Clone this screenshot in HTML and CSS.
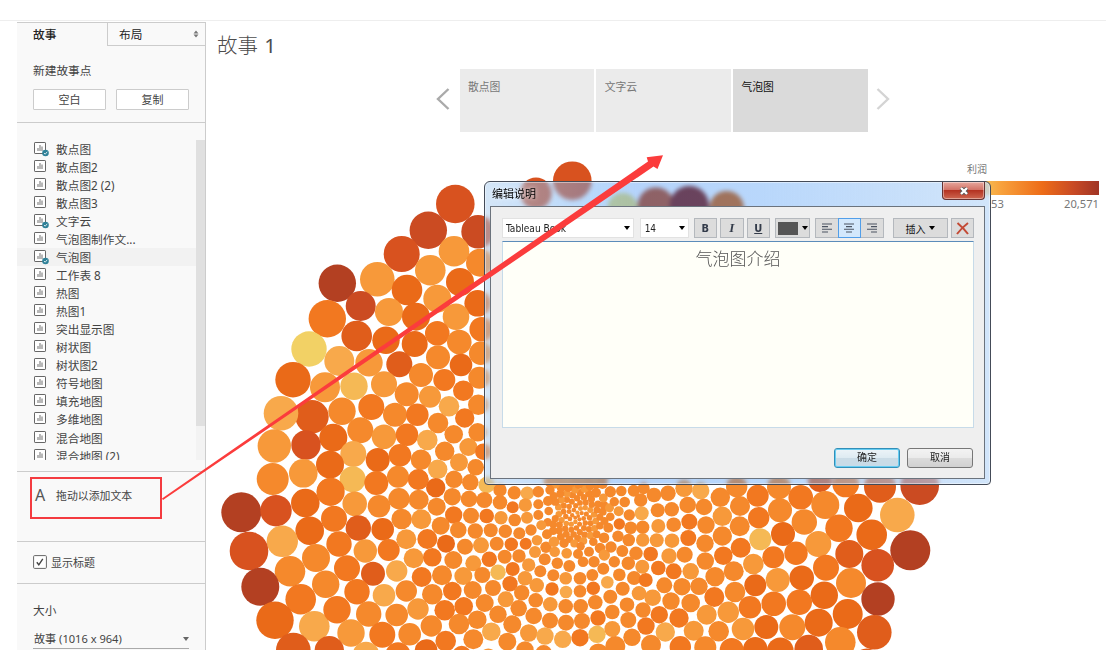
FILE: index.html
```html
<!DOCTYPE html>
<html lang="zh-CN">
<head>
<meta charset="utf-8">
<title>故事 1</title>
<link rel="stylesheet" href="styles.css">
</head>
<body>
<div class="frame">
  <div class="workspace">
    <aside class="sidebar">
      <div class="tabs"><div class="tab">故事</div><div class="tab tab-off">布局
        <svg class="sorter" width="6" height="8" viewBox="0 0 6 8"><path d="M.5 3.500 3 .5l2.500 3zM.5 4.500 3 7.500l2.500-3z"/></svg></div></div>
      <section class="new-point">
        <div>新建故事点</div>
        <div class="buttons"><button>空白</button><button>复制</button></div>
      </section>
      <section class="sheets"><ul class="list" id="list"></ul><div class="scroll"><div class="thumb"></div></div></section>
      <section class="drag"><span class="letter">A</span><span>拖动以添加文本</span></section>
      <section class="check"><svg width="14" height="14" viewBox="0 0 14 14"><rect x=".6" y=".6" width="12.800" height="12.800" rx="1" class="box"/><path class="tick" d="m3.800 7.300 2 2.500L9.800 3.800"/></svg><span>显示标题</span></section>
      <section class="size"><div>大小</div><div class="select"><span>故事 (1016 x 964)</span><i class="caret"></i></div></section>
    </aside>
    <main class="story">
      <h1>故事 <span>1</span></h1>
      <nav class="points">
        <svg class="nav-arrow" width="14" height="22" viewBox="0 0 14 22"><path d="M12.500 1 2 11l10.500 10"/></svg>
        <div class="point">散点图</div><div class="point">文字云</div><div class="point current">气泡图</div>
        <svg class="nav-arrow next" width="14" height="22" viewBox="0 0 14 22"><path d="M1.500 1 12 11 1.500 21"/></svg>
      </nav>
      <div class="legend"><div>利润</div><div class="ramp"></div><div class="range"><span>53</span><span>20,571</span></div></div>
    </main>
  </div>
  <svg class="chart" id="chart" width="1106" height="650" viewBox="0 0 1106 650"></svg>

  <div class="dialog">
    <div class="titlebar"><span>编辑说明</span><div class="close"><svg width="10" height="8" viewBox="0 0 10 8"><path class="x-edge" d="m2 1 6 6M8 1 2 7"/><path class="x-face" d="m2 1 6 6M8 1 2 7"/></svg></div></div>
    <div class="client">
      <div class="toolbar">
        <div class="combo font-name">Tableau Book<i class="caret dark"></i></div>
        <div class="combo font-size">14<i class="caret dark"></i></div>
        <div class="tool bold">B</div><div class="tool italic">I</div><div class="tool under">U</div>
        <div class="tool color"><span class="swatch"></span><i class="caret dark"></i></div>
        <div class="aligns">
          <div class="tool"><svg width="10" height="10" viewBox="0 0 10 10"><path d="M0 1h10M0 3.600h6M0 6.300h10M0 9h6"/></svg></div>
          <div class="tool chosen"><svg width="10" height="10" viewBox="0 0 10 10"><path d="M0 1h10M2 3.600h6M0 6.300h10M2 9h6"/></svg></div>
          <div class="tool"><svg width="10" height="10" viewBox="0 0 10 10"><path d="M0 1h10M4 3.600h6M0 6.300h10M4 9h6"/></svg></div>
        </div>
        <div class="tool insert">插入<i class="caret dark"></i></div>
        <div class="tool clear"><svg width="13" height="13" viewBox="0 0 13 13"><path d="M1.500 1C5 4 9 8 12 12M12 1C8 4 4 8 1 12"/></svg></div>
      </div>
      <div class="editor">气泡图介绍</div>
      <div class="actions"><button class="primary">确定</button><button>取消</button></div>
    </div>
  </div>

  <div class="callout"></div>
  <svg class="arrow" width="1106" height="650" viewBox="0 0 1106 650"><path d="M162 498.600 648 161.500 646.700 157.300 663 155.200 657.500 169 653.500 166.500 163 500z"/></svg>
</div>
<script src="bubbles.js"></script>
</body>
</html>
```
FILE: styles.css
```css
* { box-sizing: border-box; }
body { margin: 0; background: #fff; font-family: "Noto Sans", "Noto Sans CJK SC", sans-serif; font-size: 11.7px; color: #444; }
button { font: inherit; color: inherit; padding: 0; }
.frame { position: relative; width: 1106px; height: 650px; overflow: hidden; padding-top: 20px; }
.workspace { display: flex; height: 630px; border-top: 1px solid #eee; padding-left: 17px; }
.sidebar { width: 189px; flex: none; display: flex; flex-direction: column; background: #f9f9f9; border-right: 1px solid #ccc; border-top: 1px solid #ccc; margin-top: 1px; }
.tabs { display: flex; height: 23px; flex: none; line-height: 23px; color: #222; }
.tab { width: 90px; padding-left: 16px; font-weight: 500; }
.tab-off { flex: 1; border-left: 1px solid #ccc; border-bottom: 1px solid #ccc; padding: 0 6px 0 11px; display: flex; justify-content: space-between; align-items: center; font-weight: 400; }
.sorter { fill: #777; }
.new-point { height: 77px; flex: none; padding: 16px 16px 0; line-height: 16px; border-bottom: 1px solid #ccc; }
.buttons { display: flex; justify-content: space-between; margin-top: 11px; }
.buttons button { width: 73px; height: 21px; line-height: 18px; background: #fff; border: 1px solid #ccc; border-radius: 1px; font-size: 11px; }
.sheets { height: 349px; flex: none; padding-top: 17px; border-bottom: 1px solid #ccc; display: flex; }
.list { list-style: none; margin: 0; padding: 0; width: 179px; height: 320px; overflow: hidden; }
.list li { height: 18.040px; line-height: 18px; padding-left: 17px; display: flex; align-items: center; gap: 7px; white-space: nowrap; }
.list li svg { flex: none; margin-top: -1px; }
.list li.active { background: #f2f2f2; }
.scroll { width: 9px; height: 320px; background: #f3f3f3; }
.thumb { height: 286px; background: #e0e0e0; }
.drag { height: 70px; flex: none; border-bottom: 1px solid #ccc; padding: 14px 0 0 18px; display: flex; line-height: 20px; font-size: 10.900px; }
.letter { width: 21px; font-size: 16px; line-height: 18px; color: #555; }
.check { height: 42px; flex: none; border-bottom: 1px solid #ccc; padding: 0 0 1px 16px; display: flex; align-items: center; gap: 4px; font-size: 11px; }
.box { fill: #fff; stroke: #666; }
.tick { fill: none; stroke: #444; stroke-width: 1.400; }
.size { padding: 18px 16px 0; line-height: 16px; }
.select { display: flex; justify-content: space-between; align-items: center; margin-top: 12px; height: 19px; border-bottom: 1px solid #aaa; font-size: 11.100px; padding-left: 1px; }
.caret { width: 0; height: 0; border: 3px solid transparent; border-top: 4px solid #666; border-bottom: 0; }
.caret.dark { border-width: 4px 3.500px 0; border-top-color: #000; }
.story { flex: 1; position: relative; padding-left: 11px; }
h1 { margin: 9px 0 0; font-size: 20.500px; line-height: 30px; font-weight: 300; color: #4d4d4d; }
h1 span { font-weight: 400; margin-left: 1px; }
.points { display: flex; align-items: center; height: 63px; margin: 9px 0 0 218.500px; gap: 2px; }
.nav-arrow { fill: none; stroke: #aaa; stroke-width: 2.400; margin: 0 8px 4px 0; }
.next { stroke: #d4d4d4; margin: 0 0 4px 6px; }
.point { width: 134.700px; height: 63px; background: #ebebeb; color: #777; font-size: 10.800px; padding: 9px 8.500px; line-height: 18px; }
.current { background: #dadada; color: #111; }
.legend { width: 132px; margin: 29px 0 0 750px; font-size: 10px; line-height: 16px; color: #777; }
.ramp { height: 14px; width: 126px; margin: 4px 0 0 6px; background: linear-gradient(90deg, #f4d166, #f8a23d 22%, #ed6c18 55%, #c84a25 80%, #a03425); }
.range { display: flex; justify-content: space-between; padding-left: 24px; font-size: 11.200px; line-height: 18px; }
.chart, .arrow { position: absolute; left: 0; top: 0; }
.arrow { fill: #fb3c3c; }
.callout { position: absolute; left: 30px; top: 477px; width: 132px; height: 42px; border: 2px solid #f43b40; }
.dialog { position: absolute; left: 484px; top: 181px; width: 507px; height: 304px; border: 1px solid #444b58; border-radius: 6px 6px 4px 4px; padding: 0 5px 5px; background: linear-gradient(90deg, rgba(170,205,240,.5), rgba(100,170,245,.45) 20%, rgba(60,140,245,.38) 30%, rgba(70,150,245,.38) 55%, rgba(190,218,248,.7)); backdrop-filter: blur(2px); box-shadow: inset 0 0 0 1px rgba(255,255,255,.45); font-family: "DejaVu Sans Condensed", "Noto Sans CJK SC", sans-serif; font-size: 10px; color: #222; }
.titlebar { height: 24px; display: flex; justify-content: space-between; padding-left: 2px; line-height: 25px; font-size: 11px; color: #000; text-shadow: 0 0 5px #fff; }
.close { width: 43px; height: 18px; border: 1px solid #633; border-top: 0; border-radius: 0 0 4px 4px; display: flex; align-items: center; justify-content: center; background: linear-gradient(#e6a79d, #d27064 48%, #b43322 50%, #ce6751); box-shadow: inset 0 0 0 1px rgba(255,255,255,.4); }
.x-edge { stroke: #555; stroke-width: 4; } .x-face { stroke: #fff; stroke-width: 2.400; }
.client { height: 273px; background: #efefef; border: 1px solid #6b737d; padding: 11px 10px 0 11px; }
.toolbar { display: flex; height: 20px; }
.combo { background: #fff; border: 1px solid #e2e2e2; display: flex; align-items: center; justify-content: space-between; padding: 0 3px; height: 20px; }
.font-name { width: 132px; margin-right: 6px; font-size: 10.100px; font-family: "DejaVu Sans Condensed", sans-serif; } .font-size { width: 49px; margin-right: 5px; padding-left: 4px; }
.tool { height: 20px; width: 23.500px; flex: none; background: #dcdcdc; border: 1px solid #b4b8bd; display: flex; align-items: center; justify-content: center; margin-right: 3px; color: #333b4a; font-size: 11px; }
.bold { font-weight: 700; } .italic { font: italic bold 13px "Liberation Serif", serif; } .under { font-weight: 700; text-decoration: underline; }
.color { width: 35px; justify-content: space-between; padding: 0 1px 0 2px; margin: 0 5px 0 2px; }
.swatch { width: 20px; height: 13px; background: #555; }
.aligns { display: flex; margin-right: 10px; }
.aligns .tool { margin: 0 -1px 0 0; }
.aligns svg { stroke: #4b5361; stroke-width: 1.100; }
.aligns .chosen { background: #d3e8fc; border-color: #519ee9; position: relative; }
.insert { width: 55px; gap: 3px; color: #111; font-size: 10px; }
.clear { margin-right: 0; width: 23.500px; } .clear svg { fill: none; stroke: #c34a35; stroke-width: 2; }
.editor { height: 187px; margin-top: 2.500px; background: #fffff8; border: 1px solid #c7dbe9; border-top-color: #5c8cba; text-align: center; padding-top: 3px; font: 300 17px/25px "Noto Sans CJK SC", sans-serif; color: #555; }
.actions { display: flex; justify-content: flex-end; gap: 7px; padding: 20px 1px 0 0; }
.actions button { width: 66px; height: 20px; border: 1px solid #777; border-radius: 3px; background: linear-gradient(#f3f3f3, #ebebeb 48%, #dcdcdc 50%, #d0d0d0); line-height: 18px; }
.actions .primary { border-color: #328fb8; box-shadow: inset 0 0 0 1px #67cdf2; background: linear-gradient(#edf4f8, #deebf2 48%, #cbdce6 50%, #c7dbe8); }
```
FILE: bubbles.js
```javascript
const sheets = ["*散点图", "散点图2", "散点图2 (2)", "散点图3", "*文字云", "气泡图制作文...", "*气泡图", "工作表 8", "热图", "热图1", "突出显示图", "树状图", "树状图2", "符号地图", "填充地图", "多维地图", "混合地图", "混合地图 (2)"];
document.getElementById("list").innerHTML = sheets.map((s, i) => {
  const used = s[0] === "*";
  const badge = used ? '<circle cx="11.500" cy="13" r="3.300" fill="#2f8198"/><path d="m10 13 1.200 1.200 2-2.400" stroke="#fff" fill="none" stroke-width=".8"/>' : "";
  return `<li class="${i === 6 ? "active" : ""}"><svg width="15" height="17" viewBox="0 0 15 17"><rect x=".5" y="2.500" width="11" height="11" rx=".6" fill="#fff" stroke="#666"/><path d="M4 11V8M6 11V5M8 11V6.500" stroke="#888" stroke-width="1.200"/>${badge}</svg><span>${used ? s.slice(1) : s}</span></li>`;
}).join("");

// Profit ramp, dark to light; m to q are the tones seen through the title bar glass.
const ramp = { a: "#b34022", b: "#cb4b22", c: "#d8521f", d: "#e05d1b", e: "#ea6a18", f: "#f27820", g: "#f5892c", h: "#f7993a", i: "#f8a94b", j: "#f5b955", k: "#f2d165", m: "#c04810", n: "#841400", p: "#d86000", q: "#f0e070" };

// Each tile: origin x, origin y, then bubbles in thirds of a pixel (x, y, r, shade).
const tiles = [
  [430, 50, "427,392,58,c 318,430,47,c 578,475,46,q 678,467,55,m 778,467,59,n 890,475,52,p"],
  [310, 150, "436,162,58,c 355,241,56,b 275,312,54,c 504,245,50,b 432,304,46,h 361,361,46,h 82,400,56,a 202,388,52,h 152,468,45,b 291,420,46,e 510,338,42,g 450,396,42,e 382,446,42,h 52,506,56,f 237,486,42,h 318,500,42,e 503,460,40,e 438,500,40,h"],
  [310, 310, "140,78,46,d 228,91,41,e 314,102,39,e 382,70,37,f 448,96,37,g 515,58,37,f -3,117,53,k 88,153,45,i 177,158,41,h 268,163,39,d 384,142,36,g 453,165,34,e 512,130,35,g 333,195,36,g 403,210,33,f 508,203,33,g 45,232,45,h 132,229,41,j 222,223,39,h 290,253,36,g 360,260,33,h 460,242,31,f 417,289,31,i 505,284,31,g 6,320,50,d 96,304,41,g 184,291,39,f 255,314,36,g 322,314,34,f 464,324,29,f 384,339,31,g 503,367,28,g 70,383,42,e 151,361,39,g 222,380,37,h 291,374,34,f 431,373,28,g -12,405,44,c 352,390,31,i 475,411,27,h 130,432,39,i 404,424,29,g 60,464,42,e 203,450,36,e 270,436,34,f 333,449,31,g 383,478,29,i 447,457,27,h 520,425,25,f 497,472,25,g 128,508,39,j -20,490,43,h 62,545,42,f 199,519,36,f 264,500,33,g 325,509,31,f 377,533,29,e 432,508,26,g 481,517,25,g 530,525,25,j"],
  [0, 230, "879,449,53,e 843,550,52,i 823,648,50,h 818,747,48,g"],
  [200, 470, "124,127,60,a 228,122,47,c 316,99,43,e 391,66,41,f 464,101,37,h 537,109,34,g 597,86,32,g 656,89,30,g 402,146,39,f 329,182,43,e 247,214,47,i 147,243,58,c 475,174,38,d 548,178,34,e 605,147,31,g 664,148,30,h 417,222,38,f 348,264,42,g 496,243,35,h 566,240,33,f 619,208,30,h 682,207,30,f 270,304,46,g 181,350,57,a 441,295,39,f 377,343,41,g 519,311,36,d 590,303,32,i 641,265,30,h 665,321,30,f 697,262,28,f 302,388,46,f 471,365,38,f 552,376,34,i 619,363,32,g 225,451,56,e 343,469,46,i 411,419,41,f 506,432,38,g 590,435,34,g 654,417,32,h 453,489,41,h 547,494,39,f 629,493,34,g 280,540,52,d 388,542,44,d 498,555,40,i 594,555,38,f 674,540,30,e"],
  [420, 470, "-5,28,31,f 97,80,26,g 147,87,25,g 193,90,24,g 240,97,22,g 50,110,27,g 101,135,26,f 153,137,24,g 200,138,22,f 243,143,20,h 62,167,27,g 115,180,25,g 166,183,23,g 212,181,21,g 256,184,20,g 298,190,18,g 78,221,27,e 135,230,24,g 183,226,24,h 230,221,21,g 274,223,20,f 317,221,18,f 100,270,27,g 160,280,24,h 208,268,23,f 254,260,21,g 297,258,20,g 345,246,18,h 66,316,30,g 130,318,27,h 187,315,24,g 234,307,23,j 278,297,21,f 326,285,20,h 374,268,18,g 412,280,17,g 37,373,31,g 97,363,28,f 158,360,27,g 219,354,24,g 270,341,23,f 315,325,22,h 361,304,18,g 400,316,18,g 448,288,18,g 437,325,19,h 480,325,19,g 517,315,18,g 74,421,31,f 131,409,28,f 194,399,27,g 257,388,24,h 305,368,23,g 350,346,22,h 396,357,20,f 438,366,19,i 480,364,19,g 520,355,20,f 562,337,19,i 598,314,19,g 550,296,18,g 583,275,17,g 34,468,32,g 117,462,31,g 172,449,28,g 234,433,26,g 296,415,25,g 347,391,22,g 391,403,22,h 437,409,22,g 482,409,22,g 526,397,22,g 571,380,21,g 608,356,21,g 642,324,21,g 677,330,21,f 77,513,31,f 160,508,30,g 214,485,28,i 277,463,27,g 341,438,25,g 390,452,24,g 438,458,24,g 486,453,24,g 534,444,23,f 577,426,22,g 621,404,22,g 657,370,22,h 262,515,27,g 326,489,26,h 375,498,26,i 428,508,26,i 480,503,26,f 531,493,26,j 577,477,24,h 625,450,24,g 669,420,23,g 315,540,26,g 371,550,25,g 586,528,30,g 636,502,26,g 678,468,26,f 20,540,32,e 125,555,28,f 205,560,25,h 535,548,28,g 240,60,20,g 283,68,20,g 322,70,20,i 355,65,17,g 278,112,18,f 316,105,20,h 355,103,15,g 384,93,15,g 284,150,19,g 321,143,18,h 355,135,15,g 333,180,17,g 364,166,15,h 381,193,15,g 351,211,16,h 378,232,17,g 402,215,16,h 432,220,14,g 404,245,16,h 440,250,16,h 474,252,15,g 507,245,15,g 540,234,16,g 522,275,17,g 489,275,16,g 553,255,17,h 573,231,17,g 552,203,16,g 594,199,17,g 626,210,19,g 607,243,18,g 565,173,15,g 598,162,17,f 632,173,19,g 668,172,20,g 571,140,13,g 596,124,15,h 628,135,17,g 665,130,21,i 648,250,20,g 625,280,20,g 667,290,21,h 662,90,20,g 614,96,16,g 641,62,18,g 571,65,17,g 604,63,16,g 671,55,18,g 528,68,15,g 390,60,14,g 386,123,13,g 520,215,13,g 583,95,14,g"],
  [640, 470, "42,75,22,g 84,70,23,g 132,55,26,h 182,62,26,i 241,82,29,g 290,50,32,g 353,77,33,f 417,52,36,g 482,82,37,f 540,30,36,d 617,42,40,f 720,50,48,d 839,47,58,b 53,121,21,g 95,118,22,g 143,105,25,g 192,111,25,g 247,139,29,h 300,108,30,g 356,143,32,f 420,121,36,g 556,105,42,g 655,114,43,e 772,135,52,i 55,168,21,h 101,164,22,g 148,155,24,f 198,165,26,g 299,169,30,g 361,208,33,j 429,192,36,e 493,156,38,g 597,175,41,f 695,194,46,e 811,241,60,a 8,210,20,h 50,211,21,h 96,212,22,h 145,204,24,f 195,220,26,g 247,198,29,g 302,233,30,f 535,222,39,h 628,252,42,d 713,286,49,c 32,252,22,f 87,258,23,h 134,254,24,g 196,273,26,g 250,257,28,f 340,282,31,h 400,262,33,f 468,250,35,f 558,293,39,f 633,339,45,g 714,387,50,a 55,294,22,f 101,304,24,f 152,304,25,h 225,320,29,g 281,304,30,g 346,346,33,e 413,330,36,h 485,323,37,e 553,376,41,e 623,432,45,e 73,346,24,g 126,350,26,g 177,349,26,g 285,366,31,g 401,401,37,f 478,397,38,f 536,458,42,e 703,487,52,d 38,383,25,h 93,393,26,g 152,399,28,g 223,381,30,f 330,412,34,f 457,472,39,g 601,517,46,g 58,434,26,f 117,444,29,f 200,434,30,h 265,427,32,h 379,471,36,e 506,537,43,d 76,486,29,i 161,482,30,h 236,484,31,g 309,477,34,h 421,542,40,e 346,538,37,e 275,540,36,f 196,532,33,g 121,530,32,f 33,524,30,g 680,575,40,d"]
];

const dot = (x, y, r, shade) => `<circle cx="${x.toFixed(1)}" cy="${y.toFixed(1)}" r="${r.toFixed(1)}" fill="${ramp[shade]}"/>`;

const named = tiles.flatMap(([ox, oy, data]) => data.split(" ").map(item => {
  const [x, y, r, shade] = item.split(",");
  return [ox + x / 3, oy + y / 3, r / 3, shade];
}));

// The smallest bubbles spiral out from the middle of the pack.
const core = [];
for (let k = 0; k < 190; k++) {
  const d = 1.9 * Math.pow(k + 0.5, 0.62), t = k * 2.39996;
  const r = 1.8 + d * 0.08, x = 577 + d * Math.cos(t), y = 516 + d * Math.sin(t);
  if (!named.some(n => Math.hypot(n[0] - x, n[1] - y) < n[2] + r * 0.4)) core.push([x, y, r, "gghg"[k % 4]]);
}
document.getElementById("chart").innerHTML = core.concat(named).map(c => dot(...c)).join("");
```
